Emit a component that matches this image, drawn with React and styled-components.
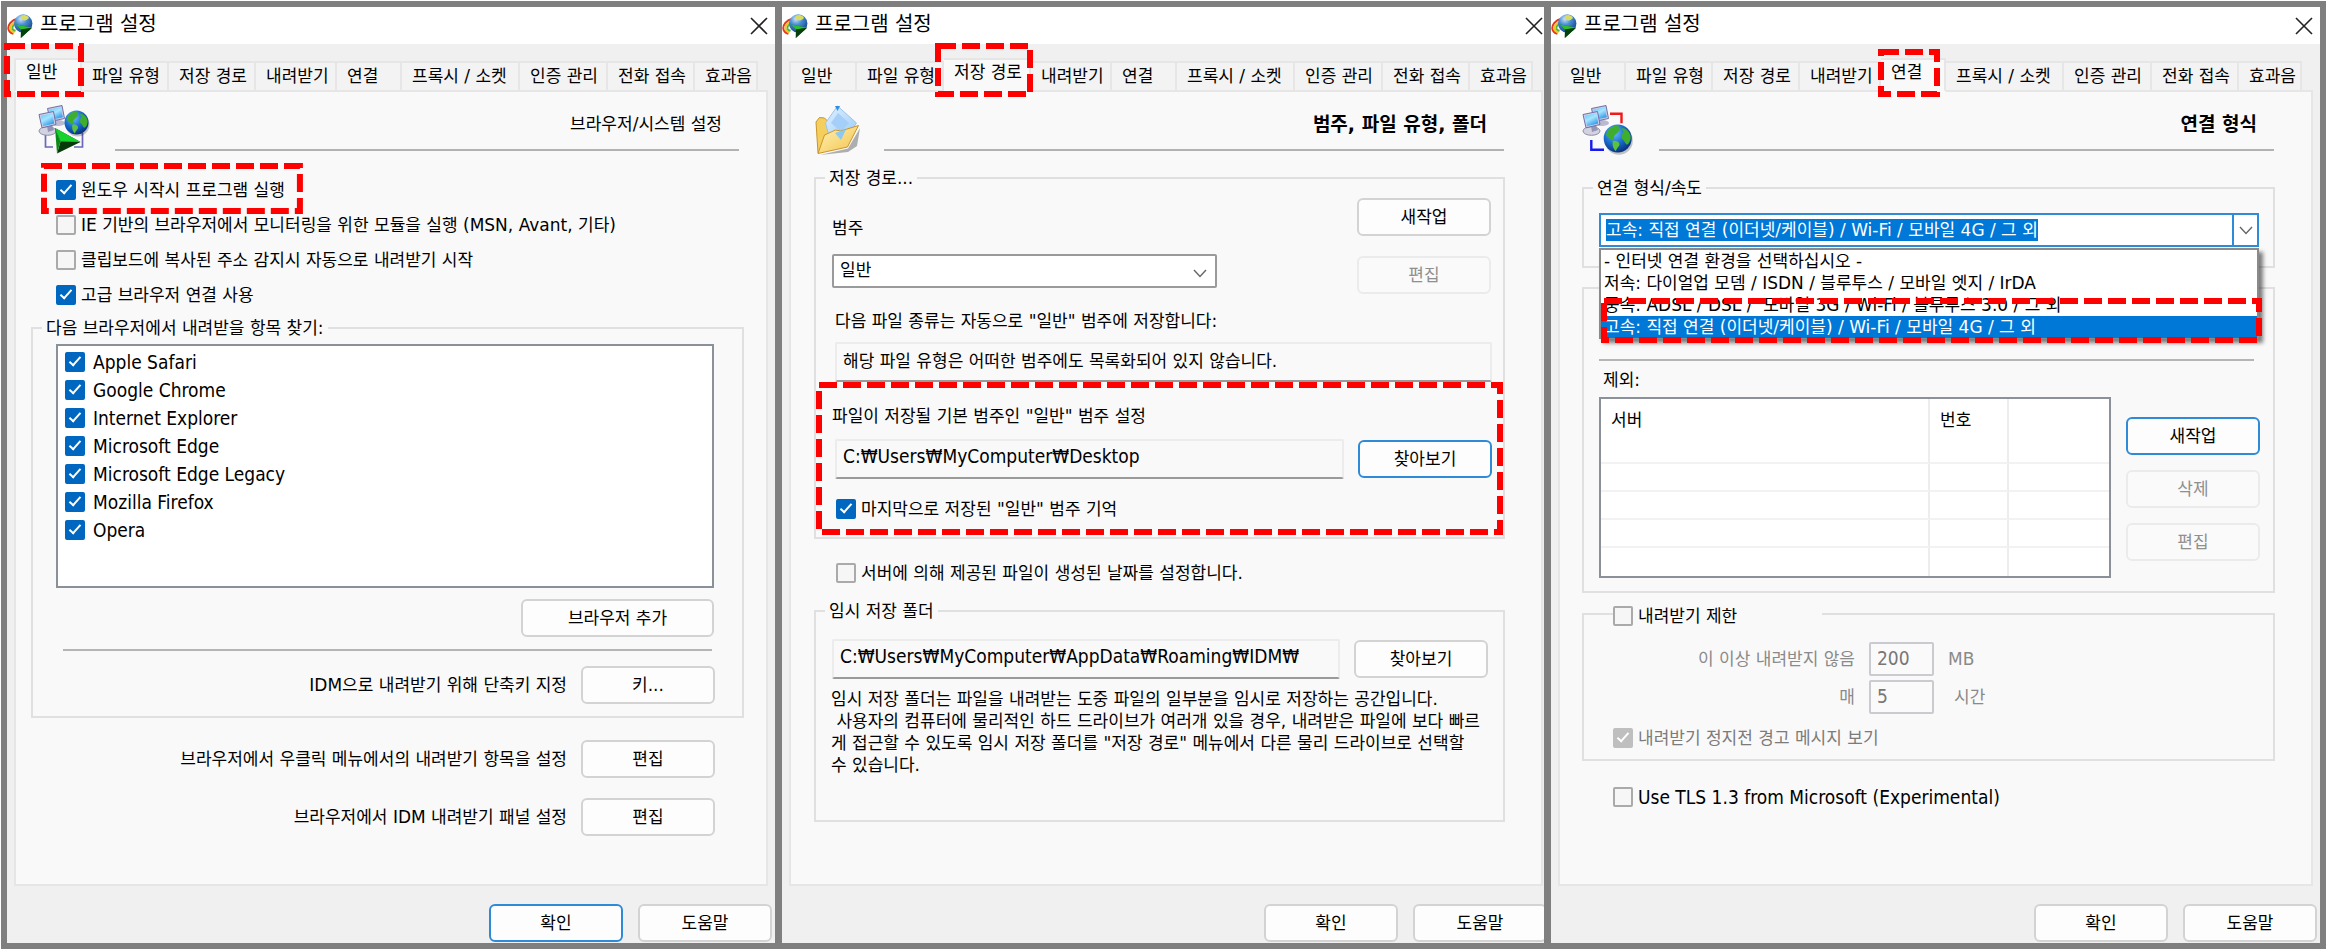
import React, { useId } from "react";
import styled, { createGlobalStyle, css } from "styled-components";

const FONT = `"DejaVu Sans", "Noto Sans CJK KR", sans-serif`;

const GlobalStyle = createGlobalStyle`
  *, *::before, *::after { box-sizing: border-box; }
  body {
    margin: 0;
    background: #fff;
    color: #000;
    font: 17px/22px ${FONT};
  }
  button, input, select { font: inherit; color: inherit; margin: 0; }
`;

/* narrower, larger face used where a line is entirely in Latin script */
const latinText = css`
  font-family: "DejaVu Sans Condensed", "Noto Sans CJK KR", sans-serif;
  font-size: 19px;
`;

/* ---------- frame ---------- */

const Board = styled.main`
  display: grid;
  grid-template-columns: 768fr 762fr 769fr;
  gap: 7px;
  min-height: calc(100vh - 2px);
  margin: 1px;
  padding: 6px;
  background: #7f7f7f;
`;

const Dialog = styled.section`
  min-width: 0;
  display: flex;
  ${(p) => p.$clipped && css`overflow: hidden;`}
`;

const DialogBody = styled.div`
  flex: 1 0 auto;
  width: ${(p) => (p.$clipped ? "calc(100% + 6px)" : "100%")};
  display: flex;
  flex-direction: column;
  background: #f0f0f0;
`;

const TitleBar = styled.header`
  display: flex;
  align-items: center;
  gap: 7px;
  height: 37px;
  padding-right: 7px;
  background: #fff;
`;

const Title = styled.h1`
  flex: 1;
  margin: 0;
  padding-bottom: 4px;
  font-size: 20px;
  line-height: 24px;
  font-weight: 400;
`;

const CloseButton = styled.button`
  display: flex;
  padding: 0;
  border: 0;
  background: none;
`;

const TabStrip = styled.div`
  display: flex;
  align-items: flex-end;
  height: 48px;
  margin-bottom: -2px;
  padding: 0 7px;
`;

const TabSlot = styled.div`
  position: relative;
  width: ${(p) => p.$width}px;
  z-index: ${(p) => (p.$active ? 1 : 0)};
`;

const TabButton = styled.button`
  display: block;
  width: 100%;
  height: ${(p) => (p.$active ? 34 : 31)}px;
  padding: ${(p) => (p.$active ? "0 0 6px" : "0 0 1px")};
  padding-left: 10px;
  text-align: left;
  white-space: nowrap;
  border: 2px solid #e6e6e6;
  border-left-width: ${(p) => (p.$first ? 2 : 0)}px;
  border-bottom-color: ${(p) => (p.$active ? "#f9f9f9" : "#e6e6e6")};
  background: ${(p) => (p.$active ? "#f9f9f9" : "#f3f3f3")};
`;

const Page = styled.div`
  flex: 1;
  margin: 0 7px;
  border: 2px solid #e6e6e6;
  background: #f9f9f9;
`;

const Footer = styled.footer`
  display: flex;
  justify-content: flex-end;
  gap: 15px;
  height: 57px;
  padding: 18px 3px 1px;
`;

/* ---------- page parts ---------- */

const PageHeader = styled.div`
  display: flex;
  align-items: flex-start;
  gap: 23px;
  height: 64px;
  padding: 12px ${(p) => p.$right}px 0 22px;
`;

const PageTitle = styled.h2`
  flex: 1;
  height: 47px;
  margin: 0;
  padding: 9px 17px 0 0;
  border-bottom: 2px solid #b2b2b2;
  font-size: ${(p) => (p.$bold ? 19 : 17)}px;
  line-height: 22px;
  font-weight: ${(p) => (p.$bold ? 700 : 400)};
  text-align: right;
`;

const Group = styled.fieldset`
  min-width: 0;
  margin: ${(p) => p.$top}px ${(p) => p.$right ?? 36}px 0 ${(p) => p.$left ?? 23}px;
  padding: 0 0 ${(p) => p.$bottom}px;
  border: 2px solid #e0e0e0;
`;

const Legend = styled.legend`
  margin-left: 9px;
  padding: 0 4px;
`;

const CheckLegend = styled.legend`
  width: 209px;
  margin-left: 29px;
  padding: 4px 0 0;
`;

const Stack = styled.div`
  display: flex;
  flex-direction: column;
  gap: ${(p) => p.$gap ?? 0}px;
  padding: ${(p) => p.$pad ?? "0"};
`;

const Row = styled.div`
  display: flex;
  align-items: ${(p) => p.$align ?? "center"};
  justify-content: ${(p) => p.$justify ?? "flex-start"};
  gap: ${(p) => p.$gap ?? 14}px;
  padding: ${(p) => p.$pad ?? "0"};
`;

const Label = styled.label`
  white-space: nowrap;
`;

const Rule = styled.hr`
  height: 2px;
  margin: ${(p) => p.$space};
  border: 0;
  background: #b5b5b5;
`;

const Button = styled.button`
  flex: none;
  width: ${(p) => (p.$wide ? 193 : 134)}px;
  height: 38px;
  padding: 0 0 1px;
  border: 2px solid ${(p) => (p.$primary ? "#2f8ad8" : "#d3d3d3")};
  border-radius: 6px;
  background: #fdfdfd;
  &:disabled {
    color: #8f8f8f;
    border-color: #ebebeb;
    background: #fafafa;
  }
`;

const CheckLine = styled.label`
  display: flex;
  align-items: center;
  gap: ${(p) => p.$gap ?? 5}px;
  height: 20px;
  white-space: nowrap;
  color: ${(p) => (p.$muted ? "#7b7b7b" : "#000")};
  ${(p) => p.$latin && latinText}
`;

const CheckBox = styled.input.attrs({ type: "checkbox" })`
  appearance: none;
  position: relative;
  flex: none;
  width: 20px;
  height: 20px;
  border: 2px solid #aaa;
  border-radius: 2px;
  background: #f6f6f6;
  &:checked {
    border-color: #0067c0;
    background: #0067c0;
  }
  &:checked:disabled {
    border-color: #bfbfbf;
    background: #bfbfbf;
  }
  &:checked::after {
    content: "";
    position: absolute;
    left: 5px;
    top: 0;
    width: 6px;
    height: 12px;
    border: solid #fff;
    border-width: 0 2px 2px 0;
    transform: rotate(42deg);
  }
`;

const BrowserList = styled.ul`
  display: flex;
  flex-direction: column;
  gap: 8px;
  height: 244px;
  margin: 5px 28px 11px 23px;
  padding: 6px 7px;
  list-style: none;
  border: 2px solid #8b9199;
  background: #fff;
`;

const TextField = styled.input.attrs({ type: "text" })`
  flex: 1;
  min-width: 0;
  height: 40px;
  padding: 0 6px 6px;
  border: 2px solid #ececec;
  border-bottom-color: #9a9a9a;
  border-radius: 2px;
  background: #f9f9f9;
  outline: 0;
  ${(p) => p.$latin && latinText}
`;

const NumberField = styled.input.attrs({ type: "text" })`
  width: 65px;
  height: 34px;
  padding: 0 6px 2px;
  border: 2px solid #c9cbd0;
  border-radius: 2px;
  background: #fafafa;
  ${latinText}
  &:disabled { color: #777; }
`;

const SelectBox = styled.div`
  position: relative;
  display: flex;
  align-items: center;
  width: 385px;
  height: 34px;
  border: 2px solid #9a9a9a;
  border-radius: 2px;
  background: #fff;
  svg { position: absolute; right: 8px; top: 13px; pointer-events: none; }
`;

const Select = styled.select`
  appearance: none;
  width: 100%;
  height: 100%;
  padding: 0 6px 2px;
  border: 0;
  background: none;
`;

const Marked = styled.div`
  position: relative;
  padding: 23px 11px 16px 16px;
`;

const Note = styled.p`
  margin: 9px 0 0;
  padding-left: 15px;
  white-space: pre;
`;

/* ---------- connection page ---------- */

const Combo = styled.div`
  position: relative;
  display: flex;
  align-items: center;
  justify-content: space-between;
  height: 34px;
  margin: 14px 14px 0 15px;
  padding-left: 5px;
  border: 2px solid #2f8ad8;
  background: #fff;
`;

const ComboSelect = styled.select`
  appearance: none;
  field-sizing: content;
  height: 22px;
  padding: 0;
  border: 0;
  background: #0078d7;
  color: #fff;
  line-height: 22px;
  outline: 0;
`;

const ComboArrow = styled.span`
  display: flex;
  align-items: center;
  justify-content: center;
  width: 25px;
  height: 100%;
  border-left: 2px solid #2f8ad8;
`;

const Menu = styled.div`
  position: absolute;
  z-index: 2;
  top: 33px;
  left: -2px;
  right: -2px;
  border: 2px solid #8a8a8a;
  border-bottom-width: 1px;
  background: #fff;
  box-shadow: 4px 4px 4px rgba(0, 0, 0, 0.5);
`;

const MenuItems = styled.ul`
  margin: 0;
  padding: 0;
  list-style: none;
`;

const MenuItem = styled.li`
  padding-left: 3px;
  white-space: pre;
  ${(p) => p.$active && css`background: #0078d7; color: #fff;`}
`;

const MenuMark = styled.div`
  position: absolute;
  inset: 48px -5px -5px 0;
`;

const ServerTable = styled.table`
  flex: 1;
  height: 181px;
  border: 2px solid #8b9199;
  border-collapse: separate;
  border-spacing: 0;
  table-layout: fixed;
  background: #fff;
  th {
    height: 37px;
    padding: 4px 10px 0;
    text-align: left;
    font-weight: 400;
  }
  td { height: 28px; padding: 0; border-bottom: 2px solid #f2f2f2; }
  tr:last-child td { border-bottom: 0; }
  th:not(:last-child), td:not(:last-child) { border-right: 2px solid #ededed; }
`;

const LimitGrid = styled.div`
  display: grid;
  grid-template-columns: 271px 65px auto;
  align-items: center;
  column-gap: 14px;
  row-gap: 4px;
  margin-top: 16px;
  color: #8a8a8a;
  > label { text-align: right; }
`;

const Unit = styled.span`
  padding-left: ${(p) => (p.$indent ? 6 : 0)}px;
`;

/* ---------- dashed callout ---------- */

const CalloutSvg = styled.svg`
  position: absolute;
  z-index: 3;
  top: ${(p) => p.$t}px;
  left: ${(p) => p.$l}px;
  width: calc(100% - ${(p) => p.$l + p.$r}px);
  height: calc(100% - ${(p) => p.$t + p.$b}px);
  pointer-events: none;
  rect {
    x: 3px;
    y: 3px;
    width: calc(100% - 6px);
    height: calc(100% - 6px);
    fill: none;
    stroke: #f00;
    stroke-width: 6px;
    stroke-dasharray: 18 6;
  }
`;

function Callout({ box = [0, 0, 0, 0] }) {
  const [t, r, b, l] = box;
  return (
    <CalloutSvg aria-hidden="true" $t={t} $r={r} $b={b} $l={l}>
      <rect />
    </CalloutSvg>
  );
}

const CheckMark = styled.div`
  position: relative;
  width: fit-content;
`;

/* ---------- icons ---------- */

const Chevron = () => (
  <svg width="14" height="9" viewBox="0 0 14 9" fill="none" stroke="#666" strokeWidth="1.4" aria-hidden="true">
    <path d="M1 1l6 6.5L13 1" />
  </svg>
);

const CloseIcon = () => (
  <svg width="18" height="18" viewBox="0 0 18 18" fill="none" stroke="#222" strokeWidth="1.6" aria-hidden="true">
    <path d="M1 1l16 16M17 1L1 17" />
  </svg>
);

function Logo() {
  const id = useId();
  return (
    <svg width="26" height="24" viewBox="0 0 26 24" aria-hidden="true">
      <defs>
        <radialGradient id={id} cx=".38" cy=".25" r=".8">
          <stop offset="0" stopColor="#cfe4f7" />
          <stop offset=".4" stopColor="#4a8fd6" />
          <stop offset="1" stopColor="#123f86" />
        </radialGradient>
      </defs>
      <g fill="none" strokeWidth="2">
        <path d="M11 4.500C4 6 .8 11 1.400 15c.5 2.600 2.500 4.200 5 4.800" stroke="#e5371f" />
        <path d="M12 6.500C6 8 2.800 11.500 3.400 14.800c.4 1.900 2 3 4.200 3.500" stroke="#f8c51c" />
        <path d="M12 8.500C8 9.500 5 12 5.400 14.400c.3 1.400 1.300 2 3.200 2.400" stroke="#4bb53c" />
      </g>
      <circle cx="16.200" cy="9.500" r="9.200" fill={`url(#${id})`} />
      <path d="M14 2c3-2 7-.5 8 2-2 2-4 3-6 2s-3-2-2-4z" fill="#d8dc62" />
      <path d="M9 10.500l16 3.200L13.800 24l.2-8.500z" fill="#0a7a14" />
      <path d="M9 10.500l16 3.200-11 1.800z" fill="#2fbf34" />
      <path d="M25 13.700L13.800 24l.2-8.500z" fill="#053f0e" />
    </svg>
  );
}

function Computers({ id }) {
  return (
    <g>
      <defs>
        <linearGradient id={`${id}s`} x1="0" y1="0" x2=".6" y2="1">
          <stop offset="0" stopColor="#5cc8fb" />
          <stop offset=".5" stopColor="#a5e4ff" />
          <stop offset="1" stopColor="#2f98e8" />
        </linearGradient>
        <radialGradient id={`${id}g`} cx=".38" cy=".3" r=".75">
          <stop offset="0" stopColor="#6ec0ff" />
          <stop offset=".5" stopColor="#1a6fd0" />
          <stop offset="1" stopColor="#072b78" />
        </radialGradient>
      </defs>
      <ellipse cx="20" cy="19" rx="7" ry="3" fill="#b9b9cf" />
      <path d="M9.500 4.500L24 1.500l2.500 13-14 3z" fill="#c9cae6" stroke="#6f70a8" />
      <path d="M11 5.800L22.800 3.300l2 10-11.300 2.500z" fill={`url(#${id}s)`} />
      <ellipse cx="9.500" cy="27" rx="8.500" ry="4.300" fill="#d2d2e0" stroke="#8e8ea6" />
      <path d="M9 22l5-1 2 5-6 2z" fill="#9494b4" />
      <path d="M1 10.500L15.500 7.500 18 20.500 4 23.800z" fill="#d0d1ec" stroke="#6f70a8" />
      <path d="M2.600 11.800L14.300 9.300l2 10.200L5 22.200z" fill={`url(#${id}s)`} />
    </g>
  );
}

const Globe = ({ cx, cy, r, id }) => (
  <g transform={`translate(${cx} ${cy}) scale(${r / 12})`}>
    <ellipse cx="1" cy="2" rx="12" ry="12" fill="#000" opacity=".22" />
    <circle r="12" fill={`url(#${id}g)`} />
    <path d="M-8.500-6.500C-6-10.500-1-11.500 1-11c-1 2 1 2.500 0 4.500S-2-4-3-2s1 3-1 3.500-3-3-5-3.500 0-3 .5-4.500z" fill="#3fae2f" />
    <path d="M-4 2c2-.5 5 .5 5.500 2.500S-1 8-1.500 11C-4 9-5 5-4 2z" fill="#5cc23c" />
    <path d="M4-9c3 .5 6 3 7 6.500C11.500 1 10 4 8.500 5S6 2 4.500 1 3-3 4.500-4.500 3-7 4-9z" fill="#3fae2f" />
  </g>
);

function BrowserIcon() {
  const id = useId();
  return (
    <svg width="54" height="52" viewBox="0 0 54 52" aria-hidden="true">
      <path d="M7.500 31v12H15M44.500 29v14H36" fill="none" stroke="#6a68b8" strokeWidth="1.700" />
      <Computers id={id} />
      <Globe id={id} cx={38.500} cy={18.500} r={12} />
      <path d="M17 24l25.500 14L19 49.500l3.500-12z" fill="#063a0a" />
      <path d="M17 24l25.500 14-20-.5z" fill="#15d32c" />
      <path d="M17 24l5.500 13.500L19 49.500z" fill="#0a8a1a" />
    </svg>
  );
}

function NetworkIcon() {
  const id = useId();
  return (
    <svg width="54" height="52" viewBox="0 0 54 52" aria-hidden="true">
      <path d="M28 9.700h11.500v9.500" fill="none" stroke="#f01818" strokeWidth="2.400" />
      <path d="M9.300 36v9.700H22" fill="none" stroke="#1818f0" strokeWidth="2.400" />
      <Computers id={id} />
      <Globe id={id} cx={35.700} cy={34.500} r={14} />
    </svg>
  );
}

function FolderIcon() {
  const id = useId();
  return (
    <svg width="48" height="52" viewBox="0 0 48 52" aria-hidden="true">
      <defs>
        <linearGradient id={`${id}a`} x1="0" y1="0" x2="1" y2="1">
          <stop offset="0" stopColor="#fff3b8" />
          <stop offset="1" stopColor="#f3c24a" />
        </linearGradient>
        <linearGradient id={`${id}b`} x1="0" y1="0" x2="1" y2="1">
          <stop offset="0" stopColor="#e2f1ff" />
          <stop offset="1" stopColor="#9accfa" />
        </linearGradient>
      </defs>
      <path d="M7 51L35 44.500 47 24l-3 18-9 6z" fill="#000" opacity=".3" />
      <path d="M3 18l3.500-4.500 5 .5 4 4 16 2-6 20L5 49z" fill="#f5cf5e" stroke="#c9952a" />
      <path d="M24.500 2l19 17-8 12-19 3-4-15z" fill={`url(#${id}b)`} stroke="#9cc4ea" />
      <path d="M25 9l11 10-8 9-10-9z" fill="#a3cff9" />
      <path d="M22 2h5l-2.500 5z" fill="#2f8de8" />
      <path d="M11.500 31l11-5 5 1 18-5.500L34.500 43 5 49.500z" fill={`url(#${id}a)`} stroke="#c9952a" />
      <path d="M22 29l11-3.500L28 36z" fill="#8cc8f2" />
    </svg>
  );
}

/* ---------- shared pieces ---------- */

const TABS = [
  ["일반", 68],
  ["파일 유형", 87],
  ["저장 경로", 87],
  ["내려받기", 81],
  ["연결", 65],
  ["프록시 / 소켓", 118],
  ["인증 관리", 88],
  ["전화 접속", 87],
  ["효과음", 63],
];

function Check({ children, gap, latin, ...rest }) {
  return (
    <CheckLine $gap={gap} $latin={latin} $muted={rest.disabled}>
      <CheckBox {...rest} />
      {children}
    </CheckLine>
  );
}

function SettingsDialog({ active, mark, clipped, okPrimary, children }) {
  return (
    <Dialog $clipped={clipped}>
      <DialogBody $clipped={clipped}>
        <TitleBar>
          <Logo />
          <Title>프로그램 설정</Title>
          <CloseButton type="button" aria-label="닫기">
            <CloseIcon />
          </CloseButton>
        </TitleBar>
        <TabStrip role="tablist">
          {TABS.map(([name, width], i) => (
            <TabSlot key={name} $width={width} $active={name === active}>
              <TabButton
                type="button"
                role="tab"
                aria-selected={name === active}
                $active={name === active}
                $first={i === 0}
              >
                {name}
              </TabButton>
              {name === active && <Callout box={mark} />}
            </TabSlot>
          ))}
        </TabStrip>
        <Page>{children}</Page>
        <Footer>
          <Button type="button" $primary={okPrimary}>확인</Button>
          <Button type="button">도움말</Button>
        </Footer>
      </DialogBody>
    </Dialog>
  );
}

/* ---------- pages ---------- */

const BROWSERS = [
  "Apple Safari",
  "Google Chrome",
  "Internet Explorer",
  "Microsoft Edge",
  "Microsoft Edge Legacy",
  "Mozilla Firefox",
  "Opera",
];

function GeneralPage() {
  return (
    <>
      <PageHeader $right={27}>
        <BrowserIcon />
        <PageTitle>브라우저/시스템 설정</PageTitle>
      </PageHeader>
      <Stack $gap={15} $pad="24px 0 0 40px">
        <CheckMark>
          <Check defaultChecked>윈도우 시작시 프로그램 실행</Check>
          <Callout box={[-17, -18, -14, -15]} />
        </CheckMark>
        <Check>IE 기반의 브라우저에서 모니터링을 위한 모듈을 실행 (MSN, Avant, 기타)</Check>
        <Check>클립보드에 복사된 주소 감지시 자동으로 내려받기 시작</Check>
        <Check defaultChecked>고급 브라우저 연결 사용</Check>
      </Stack>
      <Group $top={12} $left={15} $right={22} $bottom={12}>
        <Legend>다음 브라우저에서 내려받을 항목 찾기:</Legend>
        <BrowserList>
          {BROWSERS.map((name) => (
            <li key={name}>
              <Check defaultChecked latin gap={8}>{name}</Check>
            </li>
          ))}
        </BrowserList>
        <Row $justify="flex-end" $pad="0 28px 0 0">
          <Button type="button" $wide>브라우저 추가</Button>
        </Row>
        <Rule $space="12px 30px 15px" />
        <Row $justify="flex-end" $pad="0 27px 0 0">
          <Label htmlFor="hotkey">IDM으로 내려받기 위해 단축키 지정</Label>
          <Button type="button" id="hotkey">키...</Button>
        </Row>
      </Group>
      <Stack $gap={20} $pad="22px 51px 0 0">
        <Row $justify="flex-end">
          <Label htmlFor="context-menu">브라우저에서 우클릭 메뉴에서의 내려받기 항목을 설정</Label>
          <Button type="button" id="context-menu">편집</Button>
        </Row>
        <Row $justify="flex-end">
          <Label htmlFor="panel-edit">브라우저에서 IDM 내려받기 패널 설정</Label>
          <Button type="button" id="panel-edit">편집</Button>
        </Row>
      </Stack>
    </>
  );
}

const TEMP_NOTE = `임시 저장 폴더는 파일을 내려받는 도중 파일의 일부분을 임시로 저장하는 공간입니다.
 사용자의 컴퓨터에 물리적인 하드 드라이브가 여러개 있을 경우, 내려받은 파일에 보다 빠르
게 접근할 수 있도록 임시 저장 폴더를 "저장 경로" 메뉴에서 다른 물리 드라이브로 선택할
수 있습니다.`;

function SavePathPage() {
  return (
    <>
      <PageHeader $right={37}>
        <FolderIcon />
        <PageTitle $bold>범주, 파일 유형, 폴더</PageTitle>
      </PageHeader>
      <Group $top={11} $bottom={2}>
        <Legend>저장 경로...</Legend>
        <Row $align="flex-start" $justify="space-between" $pad="9px 12px 0 16px">
          <Stack $gap={15} $pad="19px 0 0">
            <Label htmlFor="category">범주</Label>
            <SelectBox>
              <Select id="category">
                <option>일반</option>
              </Select>
              <Chevron />
            </SelectBox>
          </Stack>
          <Stack $gap={20}>
            <Button type="button">새작업</Button>
            <Button type="button" disabled>편집</Button>
          </Stack>
        </Row>
        <Stack $gap={10} $pad="16px 11px 0 19px">
          <Label htmlFor="types">다음 파일 종류는 자동으로 "일반" 범주에 저장합니다:</Label>
          <Row>
            <TextField id="types" readOnly value="해당 파일 유형은 어떠한 범주에도 목록화되어 있지 않습니다." />
          </Row>
        </Stack>
        <Marked>
          <Stack $gap={12}>
            <Label htmlFor="default-path">파일이 저장될 기본 범주인 "일반" 범주 설정</Label>
            <Row $pad="0 0 0 3px">
              <TextField id="default-path" $latin readOnly value="C:₩Users₩MyComputer₩Desktop" />
              <Button type="button" $primary>찾아보기</Button>
            </Row>
          </Stack>
          <Stack $pad="20px 0 0 4px">
            <Check defaultChecked>마지막으로 저장된 "일반" 범주 기억</Check>
          </Stack>
          <Callout />
        </Marked>
      </Group>
      <Stack $pad="24px 0 0 45px">
        <Check>서버에 의해 제공된 파일이 생성된 날짜를 설정합니다.</Check>
      </Stack>
      <Group $top={17} $bottom={44}>
        <Legend>임시 저장 폴더</Legend>
        <Row $pad="17px 15px 0 16px">
          <TextField aria-label="임시 저장 폴더" $latin readOnly value="C:₩Users₩MyComputer₩AppData₩Roaming₩IDM₩" />
          <Button type="button">찾아보기</Button>
        </Row>
        <Note>{TEMP_NOTE}</Note>
      </Group>
    </>
  );
}

const SPEEDS = [
  "- 인터넷 연결 환경을 선택하십시오 -",
  "저속: 다이얼업 모뎀 / ISDN / 블루투스 / 모바일 엣지 / IrDA",
  "중속: ADSL / DSL /  모바일 3G / Wi-Fi / 블루투스 3.0 / 그 외",
  "고속: 직접 연결 (이더넷/케이블) / Wi-Fi / 모바일 4G / 그 외",
];

function ConnectionPage() {
  const current = SPEEDS[3];
  return (
    <>
      <PageHeader $right={37}>
        <NetworkIcon />
        <PageTitle $bold>연결 형식</PageTitle>
      </PageHeader>
      <Group $left={22} $top={21} $bottom={19}>
        <Legend>연결 형식/속도</Legend>
        <Combo>
          <ComboSelect aria-label="연결 형식/속도" defaultValue={current}>
            {SPEEDS.map((s) => (
              <option key={s}>{s}</option>
            ))}
          </ComboSelect>
          <ComboArrow>
            <Chevron />
          </ComboArrow>
          <Menu>
            <MenuItems role="listbox" aria-label="연결 형식/속도">
              {SPEEDS.map((s) => (
                <MenuItem key={s} role="option" aria-selected={s === current} $active={s === current}>
                  {s}
                </MenuItem>
              ))}
            </MenuItems>
            <MenuMark>
              <Callout />
            </MenuMark>
          </Menu>
        </Combo>
      </Group>
      <Group $left={22} $top={19} $bottom={13}>
        <Rule $space="70px 19px 8px 15px" />
        <Stack $pad="0 13px 0 19px">제외:</Stack>
        <Row $align="flex-start" $gap={15} $pad="6px 13px 0 15px">
          <ServerTable>
            <colgroup>
              <col />
              <col width="79" />
              <col width="100" />
            </colgroup>
            <thead>
              <tr>
                <th scope="col">서버</th>
                <th scope="col">번호</th>
                <th scope="col" aria-label="상태" />
              </tr>
            </thead>
            <tbody>
              {[0, 1, 2, 3, 4].map((n) => (
                <tr key={n}>
                  <td />
                  <td />
                  <td />
                </tr>
              ))}
            </tbody>
          </ServerTable>
          <Stack $gap={15} $pad="20px 0 0">
            <Button type="button" $primary>새작업</Button>
            <Button type="button" disabled>삭제</Button>
            <Button type="button" disabled>편집</Button>
          </Stack>
        </Row>
      </Group>
      <Group $left={22} $top={9} $bottom={11}>
        <CheckLegend>
          <Check>내려받기 제한</Check>
        </CheckLegend>
        <LimitGrid>
          <Label htmlFor="limit-size">이 이상 내려받지 않음</Label>
          <NumberField id="limit-size" disabled defaultValue="200" />
          <Unit>MB</Unit>
          <Label htmlFor="limit-hours">매</Label>
          <NumberField id="limit-hours" disabled defaultValue="5" />
          <Unit $indent>시간</Unit>
        </LimitGrid>
        <Stack $pad="14px 0 0 29px">
          <Check defaultChecked disabled>내려받기 정지전 경고 메시지 보기</Check>
        </Stack>
      </Group>
      <Stack $pad="26px 0 0 53px">
        <Check latin>Use TLS 1.3 from Microsoft (Experimental)</Check>
      </Stack>
    </>
  );
}

export default function App() {
  return (
    <>
      <GlobalStyle />
      <Board>
        <SettingsDialog active="일반" mark={[-15, -2, -5, -10]} okPrimary>
          <GeneralPage />
        </SettingsDialog>
        <SettingsDialog active="저장 경로" mark={[-15, -2, -5, -9]} clipped>
          <SavePathPage />
        </SettingsDialog>
        <SettingsDialog active="연결" mark={[-9, 6, -5, -3]}>
          <ConnectionPage />
        </SettingsDialog>
      </Board>
    </>
  );
}
